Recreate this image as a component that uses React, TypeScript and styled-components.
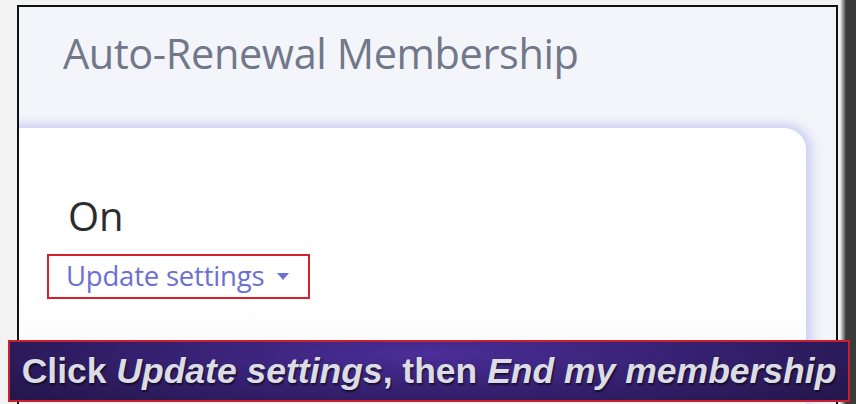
import React from 'react';
import styled, { createGlobalStyle } from 'styled-components';

const GlobalStyle = createGlobalStyle`
  html, body {
    margin: 0;
    padding: 0;
    width: 856px;
    height: 404px;
    overflow: hidden;
    background: #f3f3f3;
  }
`;

const Screen = styled.div`
  position: relative;
  display: flex;
  width: 856px;
  height: 404px;
  padding-top: 5px;
  padding-left: 17px;
  box-sizing: border-box;
  overflow: hidden;
  background: linear-gradient(to right, #f3f3f3 0, #f3f3f3 840px, #3a3a3a 846px);
`;

const Frame = styled.div`
  display: flex;
  flex-direction: column;
  width: 821px;
  height: 399px;
  border: 2px solid #111;
  border-bottom: none;
  box-sizing: border-box;
  background: #f4f5fa;
  overflow: hidden;
`;

const Title = styled.h1`
  margin: 0;
  padding: 20px 0 0 44px;
  height: 101px;
  box-sizing: border-box;
  font-family: 'Open Sans', sans-serif;
  font-weight: 500;
  font-size: 41.5px;
  line-height: 1.3;
  color: #717889;
  letter-spacing: -0.4px;
`;

const Card = styled.div`
  display: flex;
  flex-direction: column;
  align-items: flex-start;
  margin-left: -40px;
  margin-top: 20px;
  width: 827px;
  flex: 1;
  background: linear-gradient(#ffffff 0, #ffffff 60%, #f7f7f8 100%);
  border-top-right-radius: 22px;
  box-shadow: 0 -4px 10px rgba(200, 204, 240, 0.7), 6px 0 12px rgba(200, 204, 240, 0.8);
  padding: 68px 0 0 89px;
  box-sizing: border-box;
`;

const Status = styled.div`
  font-family: 'Open Sans', sans-serif;
  font-size: 40px;
  line-height: 1;
  color: #2c2c2e;
`;

const Highlight = styled.div`
  margin-top: 18px;
  margin-left: -21px;
  padding: 3px 19px 4px 17px;
  border: 2px solid #d3212d;
  display: flex;
  align-items: center;
  gap: 13px;
`;

const LinkText = styled.span`
  font-family: 'Open Sans', sans-serif;
  font-size: 27.5px;
  line-height: 34px;
  color: #6b70d2;
  letter-spacing: -0.2px;
`;

const Caret = styled.svg`
  width: 12px;
  height: 8px;
  margin-top: 2px;
`;

const Caption = styled.div`
  position: absolute;
  left: 8px;
  top: 340px;
  width: 842px;
  height: 62px;
  box-sizing: border-box;
  border: 2px solid #c8202c;
  background: radial-gradient(ellipse 60% 120% at 50% 20%, #4b2e98 0%, #35206f 55%, #24174d 100%);
  display: flex;
  align-items: center;
  justify-content: center;
  font-family: 'Liberation Sans', Arial, sans-serif;
  font-weight: 700;
  font-size: 35.5px;
  color: #dcdce4;
  text-shadow: 1px 2px 2px rgba(0, 0, 0, 0.6);
  white-space: nowrap;
`;

const Em = styled.em`
  font-style: italic;
`;

export default function App() {
  return (
    <>
      <GlobalStyle />
      <Screen>
        <Frame>
          <Title>Auto-Renewal Membership</Title>
          <Card>
            <Status>On</Status>
            <Highlight>
              <LinkText>Update settings</LinkText>
              <Caret viewBox="0 0 12 8">
                <path d="M0 0 L12 0 L6 7 Z" fill="#6b70d2" />
              </Caret>
            </Highlight>
          </Card>
        </Frame>
        <Caption>
          Click&nbsp;<Em>Update settings</Em>, then&nbsp;<Em>End my membership</Em>
        </Caption>
      </Screen>
    </>
  );
}
